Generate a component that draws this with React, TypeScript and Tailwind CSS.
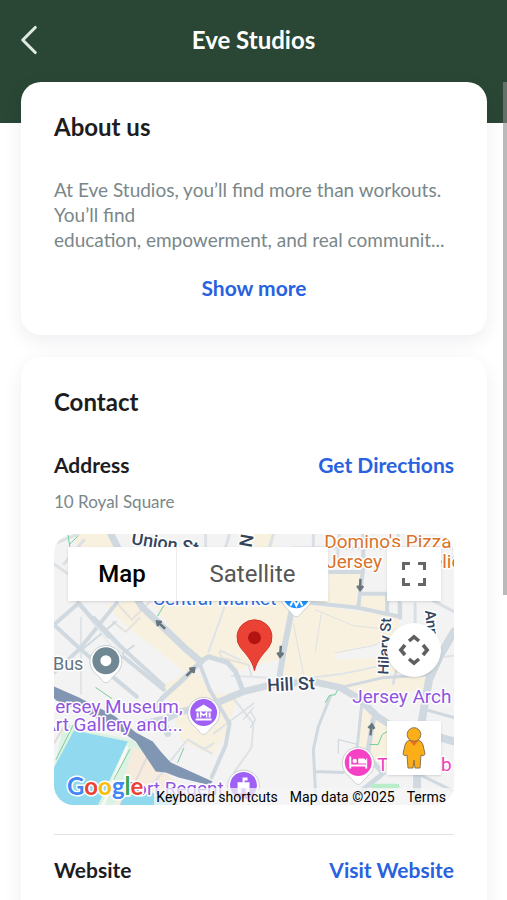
import { ChevronLeft } from "lucide-react";
import type { ReactNode } from "react";

const BUS = "#6f8894";
const PURPLE = "#a060f5";

type RoadProps = { d: string; width?: number; color?: string };

function Road({ d, width = 5, color = "#d0d9df" }: RoadProps) {
  return (
    <path d={d} fill="none" stroke={color} strokeWidth={width} strokeLinejoin="round" strokeLinecap="round" />
  );
}

type PinProps = { x: number; y: number; color: string; children?: ReactNode };

function Pin({ x, y, color, children }: PinProps) {
  return (
    <g transform={`translate(${x} ${y})`}>
      <path
        d="M0 22C-3 22-4 19-9 14A16 16 0 1 1 9 14C4 19 3 22 0 22Z"
        fill="#fff"
        stroke="#c9cdd1"
        strokeWidth="1"
      />
      <circle r="13.5" fill={color} />
      {children}
    </g>
  );
}

function Arrow({ x, y, angle }: { x: number; y: number; angle: number }) {
  return (
    <path
      transform={`translate(${x} ${y}) rotate(${angle})`}
      d="M0 6V-4M-3-1L0-5L3-1"
      fill="none"
      stroke="#67757f"
      strokeWidth="2.5"
    />
  );
}

function StreetMap() {
  return (
    <svg
      viewBox="0 0 401 272"
      preserveAspectRatio="xMidYMid slice"
      className="block w-full bg-[#f3f3f4] font-['Roboto',sans-serif]"
      role="img"
      aria-label="Street map around 10 Royal Square"
    >
      <g fill="#f9f1e0">
        <path d="M20 0H54L64 20H24Z" />
        <path d="M52 71L84 66L147 128L133 140L106 118L72 92Z" />
        <path d="M92 60H240L226 148L189 156L180 134L155 123L147 128L118 96Z" />
        <path d="M108 152L140 134L160 160L186 160L172 200L160 222L128 208L120 180Z" />
        <path d="M248 70L347 83V140L287 152L226 148L237 90Z" />
        <path d="M277 38H309L304 74L257 69L275 60Z" />
        <path d="M311 60H334V80L306 74Z" />
        <path d="M0 0H10L4 12L0 14Z" />
        <path d="M194 0H220V14H194Z" />
        <path d="M309 166L335 188V240L314 222L304 212Z" />
        <path d="M287 152L347 141L377 144L372 156L307 166Z" />
      </g>
      <path d="M197 132L226 126L224 150L190 156L184 138Z" fill="#f3f3f4" />
      <path d="M279 122L346 104L344 122L288 126Z" fill="#f3f3f4" />

      {/* harbour */}
      <path d="M10 188L28 196L78 206L96 222L60 272H0V236Z" fill="#dcf3e4" />
      <path d="M80 212L122 248L130 272H62Z" fill="#f6ebdc" />
      <path d="M20 197L74 208L44 272H0V234Z" fill="#91d9ee" />
      <path d="M70 262L124 258V272H66Z" fill="#91d9ee" />
      <Road d="M73 214L49 272" width={3} color="#f8f8f5" />
      <Road d="M76 216L60 246M20 190L2 226M42 154L58 165M130 215L124 229" width={1} color="#7ecb9c" />
      <Road d="M93 224L77 258M0 210L14 186" width={2} color="#e0ddd8" />

      {/* minor streets */}
      <g>
        <Road d="M27 84V160M172 70L155 118M167 117L186 126M178 142L214 144M225 148L290 140L347 128L401 122" width={2} color="#dfe4e8" />
        <Road d="M63 69L78 86L96 68M59 88L72 98L86 84M166 118L168 124L195 131L198 142" width={2} color="#e4e2da" />
        <Road d="M240 90L250 140M262 76L300 92L340 96M282 119L320 112L346 100M268 80L262 118" width={1} color="#dde1e3" />
        <Road d="M0 30L14 40M0 10L24 0M10 30L30 6M152 0V18M176 0L170 20M220 0L214 20" width={3} color="#dbe1e5" />
        <Road d="M160 200L200 170M176 160L200 190L198 214L180 240M158 220L134 206L118 226L100 250M134 206L150 216L160 210" width={2} color="#dde2e5" />
        <Road d="M346 20V80M362 70V96M362 30L401 24M375 64L401 78M345 130L340 150" width={3} color="#d9dfe4" />
        <Road d="M240 14H401M260 0V14M286 0L284 26M345 0V14" width={3} color="#d9dfe4" />
        <Road d="M285 220V206L304 211M200 174L190 186M197 178L202 186L197 194" width={1} color="#c9d2d8" />
      </g>

      {/* through streets */}
      <Road d="M57 0L72 30L78 56L88 73L133 116L147 128" width={7} />
      <Road d="M25 69L67 121L110 156M63 69L25 116L0 139M0 91L25 114L60 144L83 163M25 69L0 91" width={4} />
      <Road d="M67 121L80 112M28 116L62 88" width={2} />
      <Road d="M25 69L67 121" width={3} color="#f3f3f4" />
      <Road d="M24 69L55 103M40 84L66 112L110 152" width={4} />
      <Road d="M147 128L155 123L174 129L182 138L189 156" width={5} />
      <Road d="M147 128L127 148L109 164L100 176" width={5} />
      <Road d="M146 130L156 156L176 190L172 212L158 244" width={4} />
      <Road d="M110 186L128 178L164 169L190 158L214 152L260 148L287 154L307 166L324 183L335 190" width={7} />
      <Road d="M238 78L230 118L225 150" width={6} />
      <Road d="M310 0V34L305 74M257 69L305 74L347 83M277 38H310M310 60H334V80M347 70V84" width={4} />
      <Road d="M277 163L265 193L260 216L262 256L266 272M262 238L290 239M309 166L304 213" width={3} />
      <Road d="M320 186L314 222L330 240L310 256L298 272" width={5} />
      <Road d="M401 98L388 120L376 146L369 186L364 240V272" width={8} />
      <Road d="M387 204L401 208" width={8} />
      <Road d="M364 240L401 258M372 176L401 184M287 154L330 144L374 141" width={3} />
      <Road d="M91 190L109 186L114 200" width={7} />
      <path
        d="M0 153L25 164L60 182L75 193L82 199L99 208L107 218L117 229L159 248L156 252L125 244L112 239L102 238L92 223L82 208L69 199L32 179L0 166Z"
        fill="#8196b2"
      />
      <Road d="M284 157L282 161L276 162L272 169M317 211H325L329 201L334 198M110 72L104 82M16 10L24 2M14 0L16 14" width={1} color="#6fcf97" />
      <Road d="M320 253H344" width={5} color="#b9ecc9" />

      <Arrow x={107} y={91} angle={-48} />
      <Arrow x={137} y={138} angle={45} />
      <Arrow x={227} y={118} angle={184} />
      <Arrow x={307} y={51} angle={182} />
      <Arrow x={318} y={196} angle={8} />

      <g stroke="#fff" strokeWidth="3" strokeLinejoin="round" paintOrder="stroke" fontSize="19">
        <g fill="#33455c" fontWeight="500">
          <text transform="translate(77 10) rotate(9)" fontSize="18">Union St</text>
          <text transform="translate(198 14) rotate(-80)" fontSize="18">New St</text>
          <text transform="translate(214 158) rotate(-3)" fontSize="18">Hill St</text>
          <text transform="translate(335 141) rotate(-87)" fontSize="15">Hilary St</text>
          <text transform="translate(372 77) rotate(84)" fontSize="15">Ann St</text>
        </g>
        <text x="99" y="71" fontSize="19" fill="#2f6fdb">Central Market</text>
        <g fill="#d9722a">
          <text x="271" y="14">Domino's Pizza</text>
          <text x="273" y="34">Jersey - St Helier</text>
        </g>
        <text x="-1" y="136" fontSize="18" fill="#5f7480">Bus</text>
        <g fill="#9055de">
          <text x="129" y="179" textAnchor="end">Jersey Museum,</text>
          <text x="129" y="198" textAnchor="end">Art Gallery and...</text>
          <text x="299" y="169">Jersey Arch</text>
          <text x="72" y="262">Fort Regent</text>
        </g>
        <text x="324" y="238" fill="#ee3fc0">The Club</text>
      </g>

      <Pin x={52} y={127} color={BUS}>
        <circle r="5.5" fill="#fff" />
      </Pin>
      <Pin x={150} y={179} color={PURPLE}>
        <path d="M-8-3L0-8L8-3V-1H-8ZM-7 0H-5V5H-7ZM5 0H7V5H5ZM-8 6H8V8H-8Z" fill="#fff" />
        <path d="M-3 5V0L0 3L3 0V5" fill="none" stroke="#fff" strokeWidth="1.5" />
      </Pin>
      <Pin x={190} y={252} color={PURPLE}>
        <path d="M-1-8H4V-5H1V-3H6V8H2V3H-2V8H-6V-3H-1Z" fill="#fff" />
      </Pin>
      <Pin x={243} y={61} color="#1e90ff">
        <path d="M-6 11L-3 5L0 11L3 5L6 11" fill="none" stroke="#fff" strokeWidth="2" />
      </Pin>
      <Pin x={305} y={229} color="#f542c5">
        <path d="M-9-6H-7V2H8V-4H9V6H7V4H-7V6H-9ZM0-4H6L8-2V1H0Z" fill="#fff" />
        <circle cx="-3.5" cy="-1.5" r="2.2" fill="#fff" />
      </Pin>

      <path
        d="M201 137C199 127 192 120 187 114A17.5 17.5 0 1 1 215 114C210 120 203 127 201 137Z"
        fill="#ea4335"
        stroke="#d3362a"
        strokeWidth="1"
      />
      <circle cx="201" cy="104" r="6.5" fill="#b31412" />

      <text
        x="13"
        y="262"
        fontSize="24"
        fontWeight="700"
        stroke="#fff"
        strokeWidth="3"
        paintOrder="stroke"
        className="font-['Lato',sans-serif]"
      >
        <tspan fill="#4285f4">G</tspan>
        <tspan fill="#ea4335">o</tspan>
        <tspan fill="#fbbc04">o</tspan>
        <tspan fill="#4285f4">g</tspan>
        <tspan fill="#34a853">l</tspan>
        <tspan fill="#ea4335">e</tspan>
      </text>
    </svg>
  );
}

function MapView() {
  return (
    <div className="relative mt-[18px] overflow-hidden rounded-[20px] font-['Roboto',sans-serif]">
      <StreetMap />
      <div className="absolute top-[13px] left-[14px] flex h-[54px] bg-white text-2xl shadow-sm">
        <button type="button" className="w-[109px] border-r border-[#ececec] font-medium text-black">
          Map
        </button>
        <button type="button" className="w-[151px] text-[#565656]">
          Satellite
        </button>
      </div>
      <div className="absolute top-[13px] right-[13px] flex flex-col items-center">
        <button
          type="button"
          aria-label="Toggle fullscreen"
          className="flex size-[54px] items-center justify-center bg-white shadow-sm"
        >
          <svg viewBox="0 0 24 24" className="size-6" fill="none" stroke="#666" strokeWidth="3">
            <path d="M1.5 8V1.5H8M16 1.5H22.5V8M22.5 16V22.5H16M8 22.5H1.5V16" />
          </svg>
        </button>
        <button
          type="button"
          aria-label="Map camera controls"
          className="mt-[22px] flex size-[54px] items-center justify-center rounded-full bg-white shadow-sm"
        >
          <svg viewBox="0 0 32 32" className="size-8" fill="none" stroke="#5f5f5f" strokeWidth="3.5">
            <path d="M11 7L16 2.8L21 7M11 25L16 29.2L21 25M7 11L2.8 16L7 21M25 11L29.2 16L25 21" />
          </svg>
        </button>
        <button
          type="button"
          aria-label="Street View"
          className="mt-[44px] flex size-[54px] items-center justify-center bg-white shadow-sm"
        >
          <svg viewBox="0 0 24 42" className="h-[42px] w-6" stroke="#8a7350" strokeWidth="1">
            <path
              d="M8 13H16Q20 14 21 18L23 27Q22 30 19 28L18 41H13L12 33L11 41H6L5 28Q2 30 1 27L3 18Q4 14 8 13Z"
              fill="#fbae17"
            />
            <path d="M7 13H17L12 19Z" fill="#e8711a" stroke="none" />
            <circle cx="12" cy="7.5" r="6.8" fill="#fbae17" />
          </svg>
        </button>
      </div>
      <div className="absolute right-0 bottom-0 flex h-[17px] items-center gap-3 bg-[#f5f5f5]/75 pr-2 pl-[2px] text-[14px] leading-4 text-black">
        <button type="button">Keyboard shortcuts</button>
        <span>Map data ©2025</span>
        <a href="#terms">Terms</a>
      </div>
    </div>
  );
}

function Card({ title, children }: { title: string; children: ReactNode }) {
  return (
    <section className="rounded-[20px] bg-white px-[33px] pt-[31px] pb-[33px] shadow-[0_6px_20px_rgba(20,20,50,0.07)]">
      <h2 className="text-2xl leading-7 font-bold text-[#1d1d1f]">{title}</h2>
      {children}
    </section>
  );
}

type RowProps = { label: string; action: string; href: string; value: string };

function ContactRow({ label, action, href, value }: RowProps) {
  return (
    <div>
      <div className="flex items-center justify-between text-[21px] leading-7 font-bold">
        <h3 className="text-[#1d1d1f]">{label}</h3>
        <a href={href} className="text-[#2962e0]">
          {action}
        </a>
      </div>
      <p className="mt-[9px] text-[17px] leading-7 text-[#7a8789]">{value}</p>
    </div>
  );
}

export default function App() {
  return (
    <div className="relative h-screen overflow-hidden bg-white font-['Lato',sans-serif]">
      <header className="h-[123px] bg-[#2a4635] text-white">
        <div className="relative flex h-20 items-center justify-center">
          <button type="button" aria-label="Back" className="absolute left-1 text-[#dfe8e1]">
            <ChevronLeft className="size-[50px]" strokeWidth={1.5} />
          </button>
          <h1 className="text-2xl leading-7 font-bold">Eve Studios</h1>
        </div>
      </header>

      <main className="relative -mt-[41px] flex flex-col gap-[22px] pr-5 pl-[21px]">
        <Card title="About us">
          <p className="mt-9 text-[19px] leading-[25px] text-[#7a8789]">
            At Eve Studios, you’ll find more than workouts. You’ll find
            <br />
            education, empowerment, and real communit...
          </p>
          <button type="button" className="mx-auto mt-[22px] block text-[21px] leading-7 font-bold text-[#2962e0]">
            Show more
          </button>
        </Card>

        <Card title="Contact">
          <div className="mt-[35px]">
            <ContactRow label="Address" action="Get Directions" href="#directions" value="10 Royal Square" />
            <MapView />
            <hr className="mt-[29px] mb-[21px] border-[#e3e3e3]" />
            <ContactRow label="Website" action="Visit Website" href="#website" value="https://evestudios.com" />
          </div>
        </Card>
      </main>

      <div className="absolute top-[82px] right-0 h-[57%] w-1 bg-[#8c8c8c]/60" />
    </div>
  );
}
